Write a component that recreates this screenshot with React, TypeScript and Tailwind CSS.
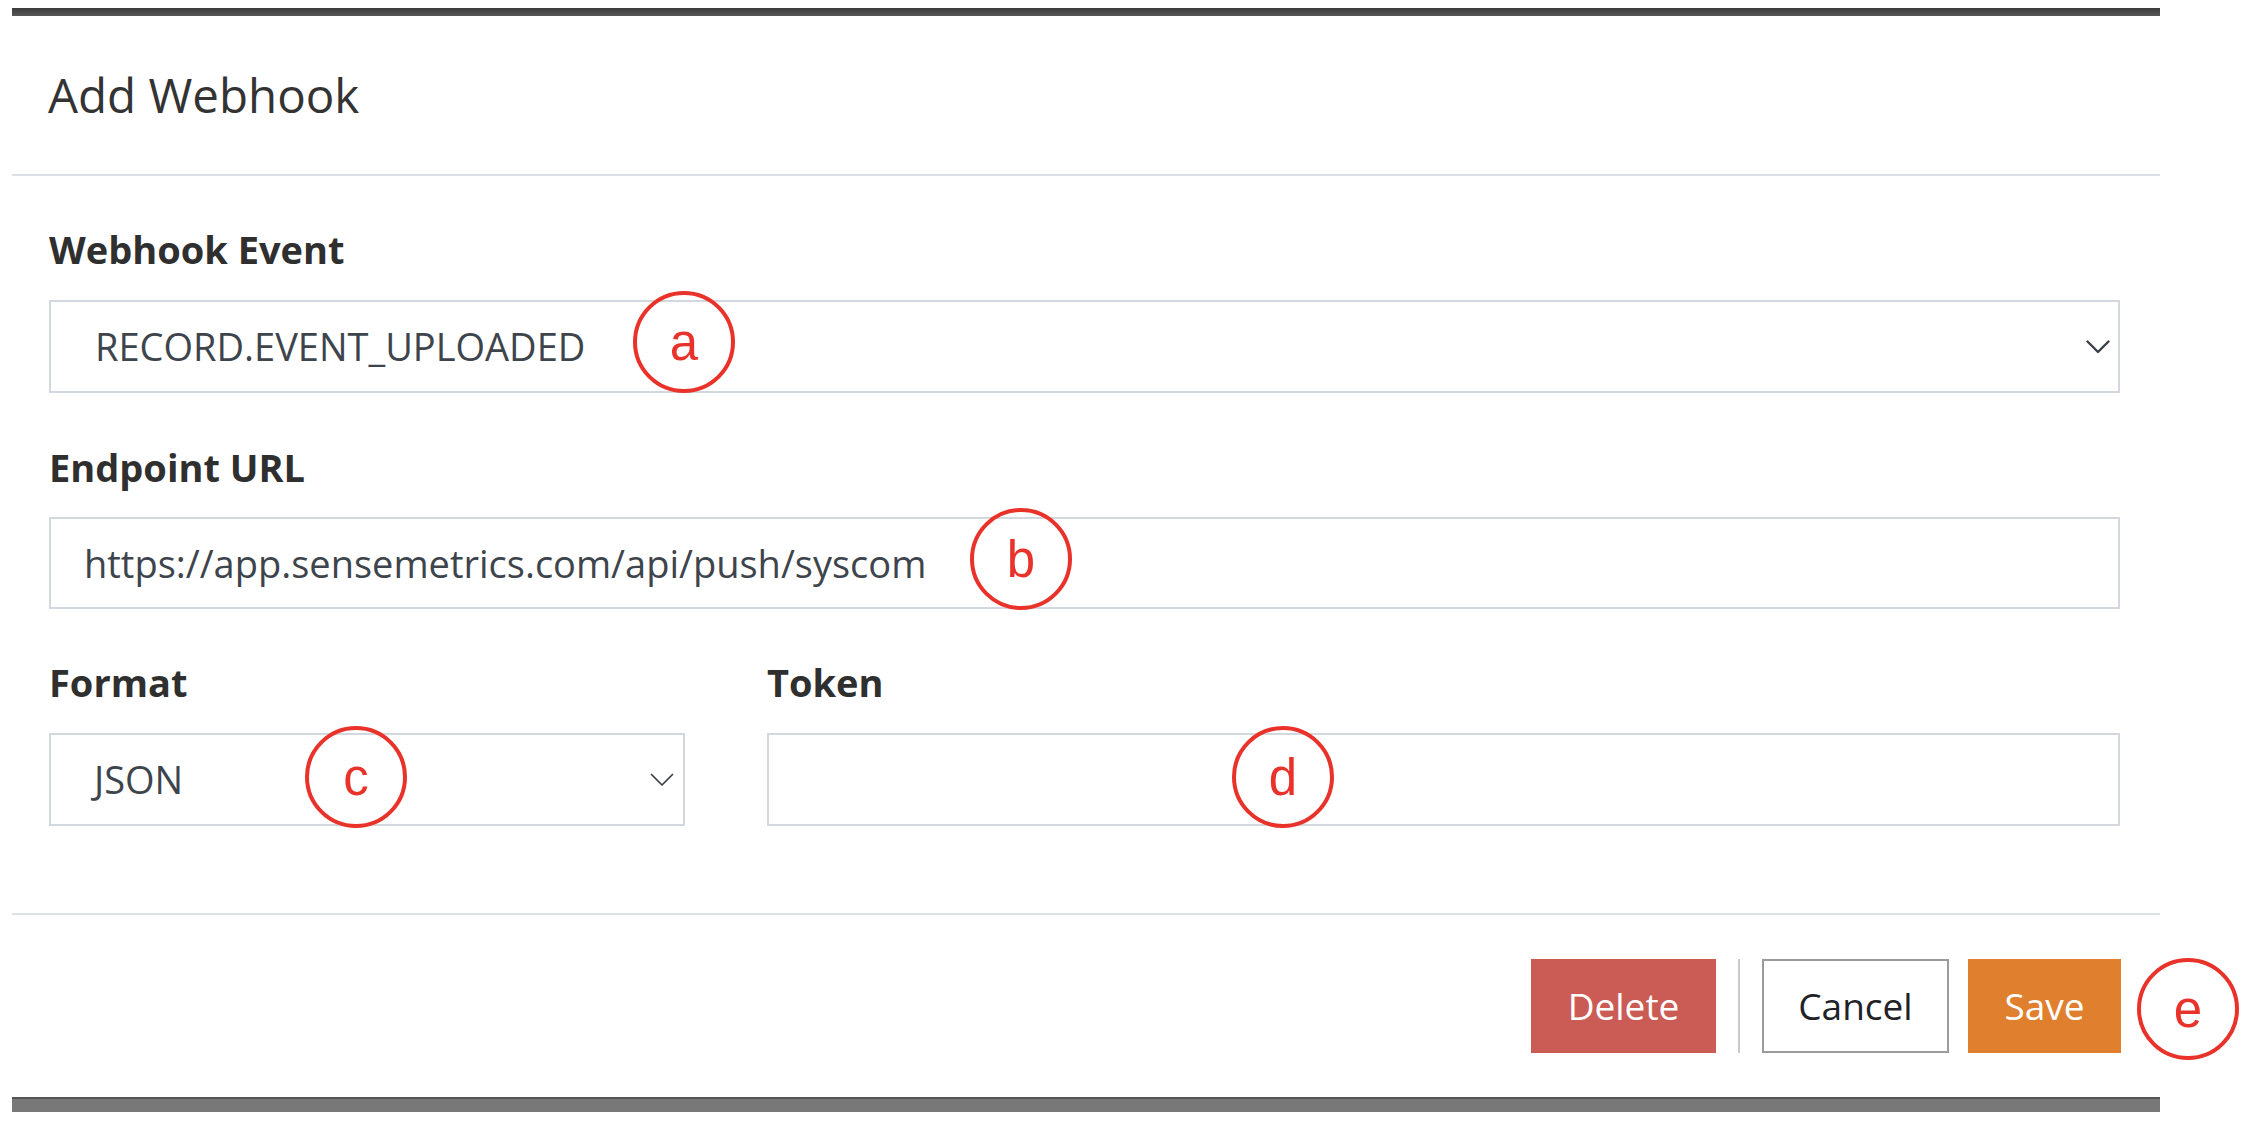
import React from "react";

const Chevron = ({ thin }: { thin?: boolean }) => (
  <svg width="24" height="14" viewBox="0 0 24 14" fill="none">
    <polyline
      points="1.5,1.5 12,12 22.5,1.5"
      stroke="#3b4048"
      strokeWidth={thin ? 1.7 : 2.4}
      strokeLinecap="round"
      strokeLinejoin="round"
    />
  </svg>
);

const Label = ({ children }: { children: React.ReactNode }) => (
  <div className="mb-[26px] text-[38px] font-bold leading-[50px] text-[#2f2f2f]">{children}</div>
);

export default function App() {
  return (
    <div className="relative h-[1124px] w-[2262px] overflow-hidden bg-white font-['Open_Sans',sans-serif]">
      <div className="ml-[12px] w-[2148px] pt-[8px]">
        <div className="h-[8px] bg-gradient-to-b from-[#3c3c3c] to-[#585858]" />

        <div className="flex h-[160px] items-center border-b-2 border-[#dde1e6] pl-[36px]">
          <h1 className="text-[47.5px] font-normal leading-none text-[#333]">Add Webhook</h1>
        </div>

        <div className="pl-[37px] pr-[40px] pt-[48px] pb-[87px]">
          <Label>Webhook Event</Label>
          <div className="flex h-[93px] items-center justify-between border-2 border-[#d3d8de] pl-[44px] pr-[8px] text-[38px] text-[#3e444c]">
            <span>RECORD.EVENT_UPLOADED</span>
            <Chevron />
          </div>

          <div className="mt-[49px]">
            <div className="mb-[25px] text-[38px] font-bold leading-[50px] text-[#2f2f2f]">Endpoint URL</div>
            <input
              readOnly
              value="https://app.sensemetrics.com/api/push/syscom"
              className="h-[92px] w-full border-2 border-[#d3d8de] pl-[33px] text-[38px] text-[#3e444c] outline-none"
            />
          </div>

          <div className="mt-[48px] grid grid-cols-[636px_1fr] gap-x-[82px]">
            <div>
              <Label>Format</Label>
              <div className="flex h-[93px] items-center justify-between border-2 border-[#d3d8de] pl-[43px] pr-[9px] text-[38px] text-[#3e444c]">
                <span>JSON</span>
                <Chevron thin />
              </div>
            </div>
            <div>
              <Label>Token</Label>
              <input
                readOnly
                value=""
                className="h-[93px] w-full border-2 border-[#d3d8de] pl-[33px] text-[38px] text-[#3e444c] outline-none"
              />
            </div>
          </div>
        </div>

        <div className="h-[2px] bg-[#dde1e6]" />

        <div className="flex items-center justify-end pr-[39px] pt-[44px] pb-[44px] text-[37px]">
          <button className="h-[94px] w-[185px] bg-[#cb5b55] text-white">Delete</button>
          <div className="mx-[22px] h-[94px] w-[2px] bg-[#c9c9c9]" />
          <button className="h-[94px] w-[187px] border-2 border-[#9b9b9b] bg-white text-[#1e2227]">Cancel</button>
          <button className="ml-[19px] h-[94px] w-[153px] bg-[#e0802f] text-white">Save</button>
        </div>

        <div className="h-[15px] border-t-2 border-[#545454] bg-[#787878]" />
      </div>

      <div className="absolute left-[633px] top-[291px] flex h-[102px] w-[102px] items-center justify-center rounded-full border-[4.5px] border-[#e8322a] font-['Liberation_Sans',Arial,sans-serif] text-[51px] leading-none text-[#e8322a]">a</div>
      <div className="absolute left-[970px] top-[508px] flex h-[102px] w-[102px] items-center justify-center rounded-full border-[4.5px] border-[#e8322a] font-['Liberation_Sans',Arial,sans-serif] text-[51px] leading-none text-[#e8322a]">b</div>
      <div className="absolute left-[305px] top-[726px] flex h-[102px] w-[102px] items-center justify-center rounded-full border-[4.5px] border-[#e8322a] font-['Liberation_Sans',Arial,sans-serif] text-[51px] leading-none text-[#e8322a]">c</div>
      <div className="absolute left-[1232px] top-[726px] flex h-[102px] w-[102px] items-center justify-center rounded-full border-[4.5px] border-[#e8322a] font-['Liberation_Sans',Arial,sans-serif] text-[51px] leading-none text-[#e8322a]">d</div>
      <div className="absolute left-[2137px] top-[958px] flex h-[102px] w-[102px] items-center justify-center rounded-full border-[4.5px] border-[#e8322a] font-['Liberation_Sans',Arial,sans-serif] text-[51px] leading-none text-[#e8322a]">e</div>
    </div>
  );
}
